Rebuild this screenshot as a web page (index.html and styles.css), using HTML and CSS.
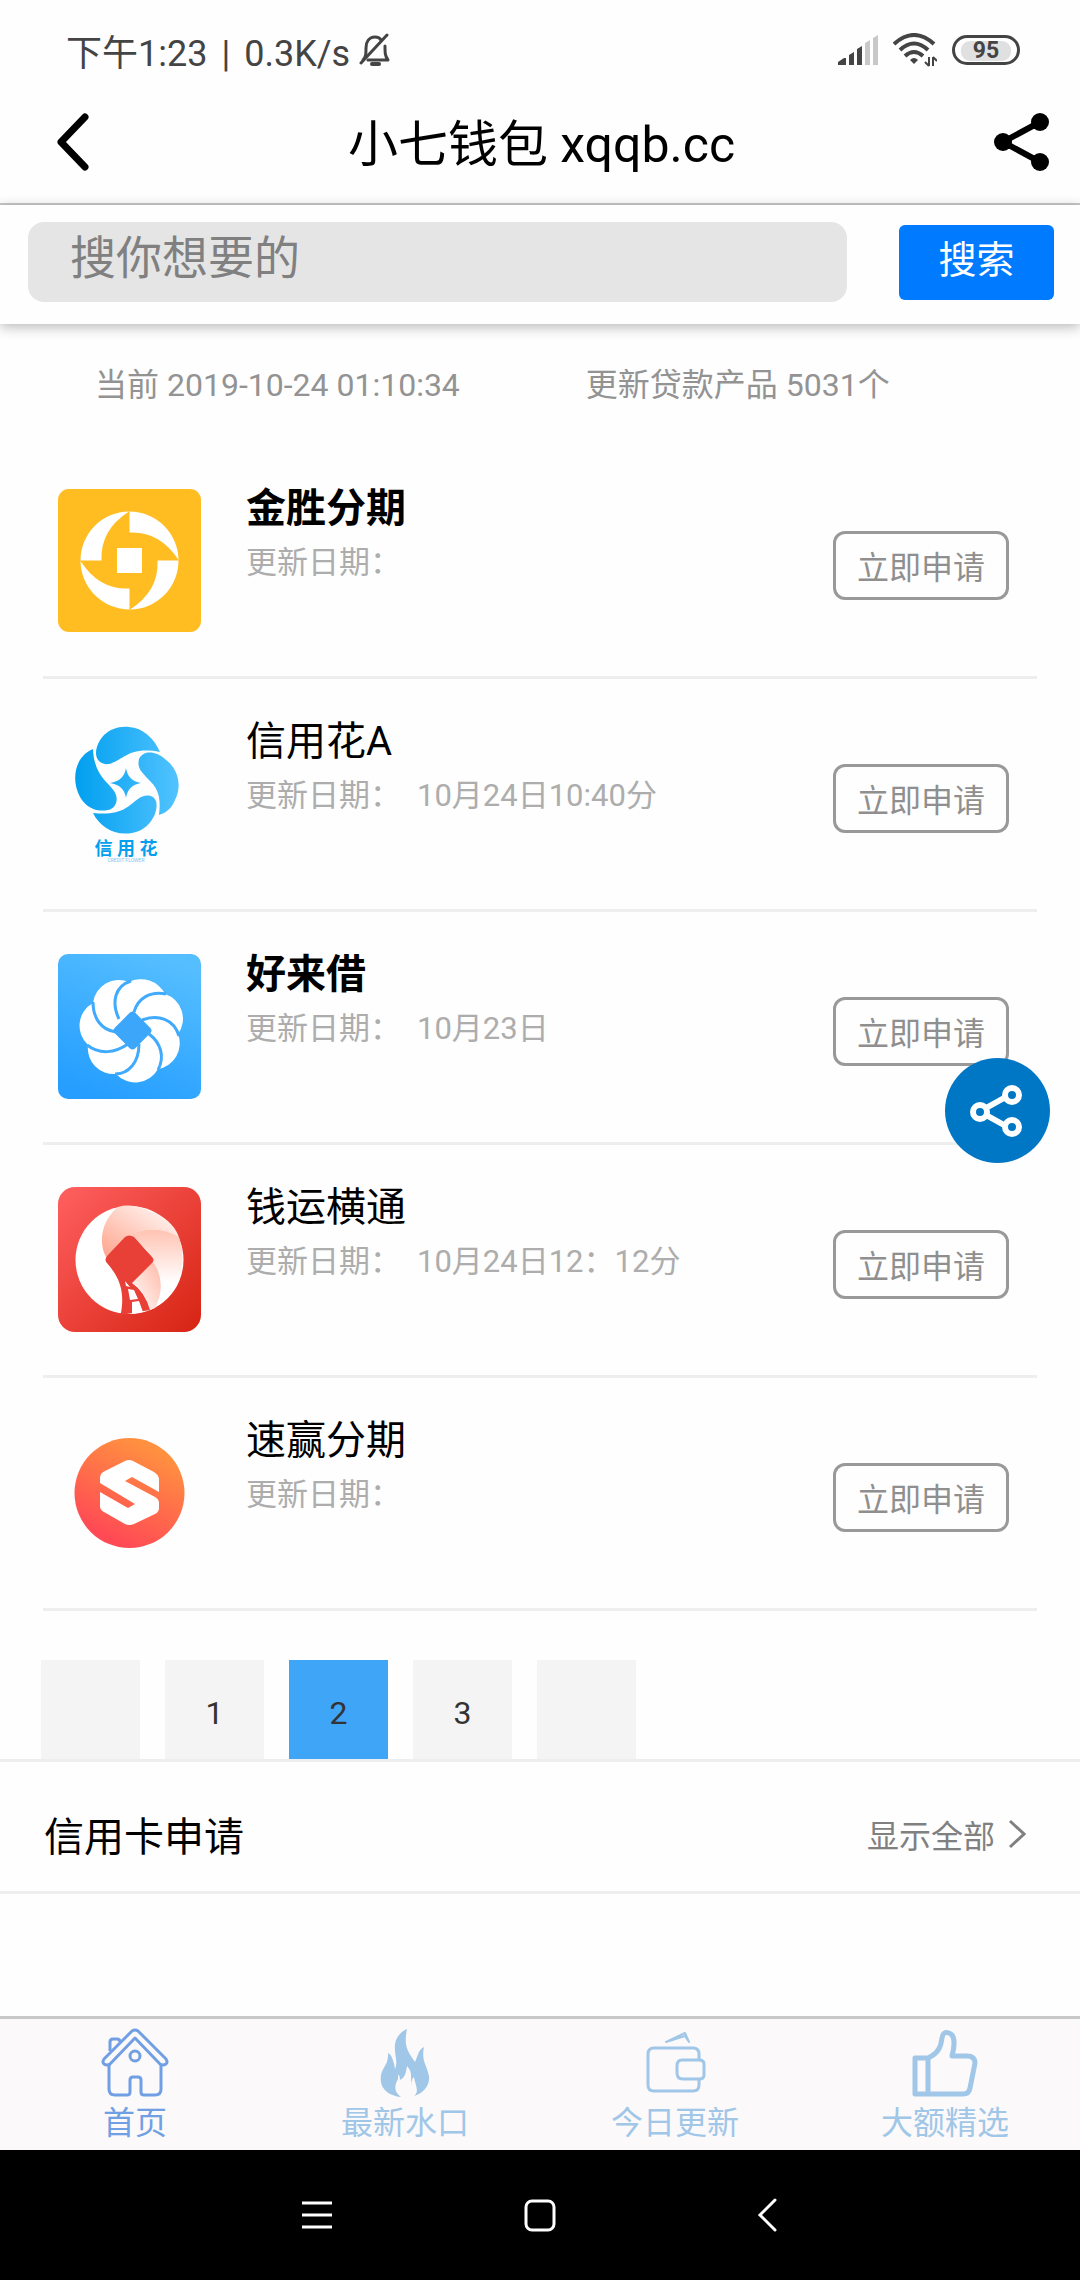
FILE: index.html
```html
<!DOCTYPE html>
<html lang="zh-CN">
<head>
<meta charset="utf-8">
<meta name="viewport" content="width=device-width, initial-scale=1">
<title>小七钱包 xqqb.cc</title>
<link rel="stylesheet" href="styles.css">
</head>
<body>
<div class="status-bar">
  <div class="status-left">
    <div class="status-text"><span>下午1:23</span><span>|</span><span>0.3K/s</span></div>
    <svg width="32" height="34" viewBox="0 0 32 34" fill="none" stroke="#444" stroke-width="3" stroke-linecap="round" stroke-linejoin="round"><path d="M4 27c3-3 3-6 3-12 0-6 3-11 9-11 3 0 5 1 6 3M26 13c0 7 0 10 3 14H9"/><path d="M2 30L28 2"/><path d="M13 31h7" stroke-width="4"/></svg>
  </div>
  <div class="status-right">
    <svg width="40" height="30" viewBox="0 0 40 30"><g fill="#444"><path d="M0 30v-3l6-4h2v7z"/><path d="M11 30V20l5-3v13zM19 30V14l5-3v19z"/></g><g fill="#c8c8c8"><path d="M27 30V8l5-3v25zM35 30V3l5-3v30z"/></g></svg>
    <svg width="44" height="34" viewBox="0 0 44 34" fill="none" stroke="#444" stroke-width="4"><path d="M1 11Q21-7 41 11"/><path d="M7 17q14-13 28 0"/><path d="M12 23q9-8 18 0"/><path d="M17 27q4-4 8 0l-4 4z" fill="#444" stroke="none"/><path d="M36 24v9M40 24v9" stroke-width="2"/><path d="M32 29l4 4M40 24l4 4" stroke-width="2"/></svg>
    <span class="battery"><span class="battery-level">95</span></span>
  </div>
</div>
<header class="title-bar">
  <button class="icon-button" type="button" aria-label="返回"><svg width="32" height="58" viewBox="0 0 32 58" fill="none" stroke="#000" stroke-width="7" stroke-linecap="round" stroke-linejoin="round"><path d="M28 4L4 29l24 25"/></svg></button>
  <h1 class="page-title">小七钱包 xqqb.cc</h1>
  <button class="icon-button" type="button" aria-label="分享"><svg width="56" height="60" viewBox="0 0 56 60"><path d="M46 10L9 30l37 20" fill="none" stroke="#000" stroke-width="6"/><circle cx="46" cy="10" r="9"/><circle cx="9" cy="30" r="9"/><circle cx="46" cy="50" r="9"/></svg></button>
</header>
<form class="search-bar">
  <input class="search-input" type="text" placeholder="搜你想要的" aria-label="搜你想要的">
  <button class="search-button" type="submit">搜索</button>
</form>
<main class="content">
  <div class="summary"><span>当前 2019-10-24 01:10:34</span><span>更新贷款产品 5031个</span></div>
  <ul class="products">
    <li class="product">
      <svg class="logo" viewBox="0 -1 143 145"><rect width="143" height="143" rx="11" fill="#ffbd22"/><g fill="#fff"><rect x="59" y="59" width="25" height="25"/><path id="blade" d="M71.500 22.500a49 49 0 0 1 49 48.500Q102 42 71.500 43.500z"/><use href="#blade" transform="rotate(90 71.500 71.500)"/><use href="#blade" transform="rotate(180 71.500 71.500)"/><use href="#blade" transform="rotate(270 71.500 71.500)"/></g></svg>
      <div class="info"><h2 class="name name-strong">金胜分期</h2><p class="date">更新日期：</p></div>
      <button class="apply" type="button">立即申请</button>
    </li>
    <li class="product">
      <svg class="logo" viewBox="0 0 143 145"><defs><linearGradient id="sky" x1="17" y1="0" x2="121" y2="0" gradientUnits="userSpaceOnUse"><stop offset="0" stop-color="#009fef"/><stop offset="1" stop-color="#52c3ff"/></linearGradient></defs><g fill="url(#sky)"><path d="M102 31C96 17 85 7 71 6C52 4 39 17 38 32C38 40 44 44 51 43C65 40 70 25 102 31z"/><path d="M81 38C86 28 99 31 107 38C121 48 124 66 117 79C114 87 108 92 101 94C103 77 101 68 90 58C83 50 79 47 81 38z"/><path d="M35 28C20 34 15 51 18 65C22 83 35 92 50 89C59 87 61 77 56 70C50 61 36 54 35 28z"/><path d="M35 92C42 106 56 115 74 112C92 109 101 91 98 80C95 73 86 73 80 78C69 86 63 95 35 92z"/><path d="M68 47Q70 60 83 62Q70 64 68 77Q66 64 52 62Q66 60 68 47z"/></g><text class="logo-name" x="68" y="134" text-anchor="middle">信 用 花</text><text class="logo-caption" x="68" y="141" text-anchor="middle">CREDIT FLOWER</text></svg>
      <div class="info"><h2 class="name">信用花A</h2><p class="date">更新日期：<span>10月24日10:40分</span></p></div>
      <button class="apply" type="button">立即申请</button>
    </li>
    <li class="product">
      <svg class="logo" viewBox="0 0 143 145"><defs><linearGradient id="azure" x1=".7" y1="0" x2=".3" y2="1"><stop offset="0" stop-color="#55beff"/><stop offset="1" stop-color="#259eff"/></linearGradient></defs><rect width="143" height="145" rx="10" fill="url(#azure)"/><path d="M71 28A27 27 0 0 1 107 40A26 26 0 0 1 120 80A26 26 0 0 1 100 115A26 26 0 0 1 58 120A26 26 0 0 1 30 91A26 26 0 0 1 35 49A26 26 0 0 1 71 28z" fill="#fff"/><g fill="none" stroke="#40aafd" stroke-width="3"><path d="M73 27C57 32 53 48 61 65"/><path d="M108 40C92 37 80 44 76 58"/><path d="M121 82C116 65 100 60 84 66"/><path d="M100 116C107 103 103 89 91 80"/><path d="M57 120C71 120 81 108 81 90"/><path d="M29 91C42 101 57 99 70 90"/><path d="M35 48C35 64 43 76 58 78"/></g><rect x="60" y="62" width="29" height="29" rx="4" fill="#3ca6fb" transform="rotate(45 74.500 76.500)"/></svg>
      <div class="info"><h2 class="name name-strong">好来借</h2><p class="date">更新日期：<span>10月23日</span></p></div>
      <button class="apply" type="button">立即申请</button>
    </li>
    <li class="product">
      <svg class="logo" viewBox="0 0 143 145"><defs><linearGradient id="red" x1="0" y1="0" x2="1" y2="1"><stop offset="0" stop-color="#ff6060"/><stop offset="1" stop-color="#d62413"/></linearGradient><linearGradient id="fold1" x1="0" y1="1" x2="1" y2="0"><stop offset="0" stop-color="#ffa48c"/><stop offset="1" stop-color="#fff"/></linearGradient><linearGradient id="fold2" x1="0" y1="0" x2="0" y2="1"><stop offset="0" stop-color="#ffc3b2"/><stop offset=".7" stop-color="#fff"/></linearGradient><linearGradient id="fold3" x1="1" y1="0" x2="0" y2="1"><stop offset="0" stop-color="#ffb7a5"/><stop offset="1" stop-color="#fff"/></linearGradient></defs><rect width="143" height="145" rx="17" fill="url(#red)"/><circle cx="71.500" cy="73" r="54" fill="#fff"/><path d="M60 20Q72 16 89 23Q114 31 121 50Q98 36 72 48L48 70C39 52 46 31 60 20z" fill="url(#fold1)"/><path d="M71 48Q98 36 121 50Q127 67 123 84Q119 107 97 119Q106 94 95 74L88 62z" fill="url(#fold2)"/><path d="M94 73Q110 96 97 121L92 123Q88 105 74 95z" fill="url(#fold3)"/><path d="M76 50L94 70Q97 73 94 76L74 96Q87 105 92 123L63 128H46L63 126C67 103 61 90 49 76Q46 73 49 69L67 50Q71 47 76 50z" fill="#e83f36"/><path d="M67 94l5 6-4-1zM70 102l6 1 4 9-8 1zM74 115l7-1 4 11-11 2z" fill="#fff"/></svg>
      <div class="info"><h2 class="name">钱运横通</h2><p class="date">更新日期：<span>10月24日12：12分</span></p></div>
      <button class="apply" type="button">立即申请</button>
    </li>
    <li class="product">
      <svg class="logo" viewBox="0 0 143 145"><defs><linearGradient id="sunset" x1=".7" y1=".1" x2=".3" y2=".9"><stop offset="0" stop-color="#ff9040"/><stop offset="1" stop-color="#ff4a55"/></linearGradient></defs><circle cx="71.500" cy="73" r="55" fill="url(#sunset)"/><path d="M42 63V58Q42 53 47 51L67 41Q71 39 75 41L96 52Q101 55 101 60V72L74 57L67 61L97 77Q101 79 101 83V88Q101 92 97 94L76 104Q71 106 67 104L46 92Q42 90 42 86V72L70 88L77 84Z" fill="#fff"/></svg>
      <div class="info"><h2 class="name">速赢分期</h2><p class="date">更新日期：</p></div>
      <button class="apply" type="button">立即申请</button>
    </li>
  </ul>
  <nav class="pager" aria-label="分页">
    <a class="page" href="#prev" aria-label="上一页"></a><a class="page" href="#1">1</a><a class="page page-current" href="#2" aria-current="page">2</a><a class="page" href="#3">3</a><a class="page" href="#next" aria-label="下一页"></a>
  </nav>
  <section class="cards">
    <h2 class="cards-title">信用卡申请</h2>
    <a class="more" href="#cards">显示全部<svg width="18" height="30" viewBox="0 0 18 30" fill="none" stroke="#808080" stroke-width="3"><path d="M2 2l14 13L2 28"/></svg></a>
  </section>
</main>
<button class="share-float" type="button" aria-label="分享"><svg width="58" height="54" viewBox="0 0 58 54" fill="none" stroke="#fff" stroke-width="6"><path d="M17 24l18-10M17 31l18 10"/><circle cx="11" cy="28" r="7"/><circle cx="43" cy="11" r="7"/><circle cx="43" cy="43" r="7"/></svg></button>
<nav class="tab-bar">
  <a class="tab tab-current" href="#home"><svg width="68" height="70" viewBox="0 0 68 70" fill="none" stroke="#719fe4" stroke-width="3" stroke-linejoin="round"><path d="M31 3q3-2 6 0L65 31q2 3 0 5-3 2-6 0L34 10 9 36q-3 2-6 0-2-2 0-5z"/><path d="M9 23V14q0-3 3-3h4q3 0 3 3"/><path d="M8 37v24q0 6 6 6h12q3 0 3-3V52q0-3 3-3h5q3 0 3 3v12q0 3 3 3h11q6 0 6-6V37"/><circle cx="34" cy="28" r="5"/></svg><span>首页</span></a>
  <a class="tab" href="#latest"><svg width="68" height="70" viewBox="0 0 68 70" fill="#a0c6e8"><path d="M36 1C27 5 23 13 24 22C24 29 27 34 24 41C23 34 21 27 17 25C18 39 8 40 10 54C11 62 19 68 30 69C23 64 23 58 27 51Q27 45 28 47Q29 49 29 52C35 49 35 43 36 38C41 43 40 48 40 53Q40 56 41 58Q39 52 43 49C44 57 49 63 43 68C53 65 59 57 58 48C56 37 50 33 53 19C47 22 47 28 44 34C38 25 32 19 36 1z"/></svg><span>最新水口</span></a>
  <a class="tab" href="#today"><svg width="68" height="70" viewBox="0 0 68 70" fill="none" stroke="#a0c6e8" stroke-width="3" stroke-linejoin="round"><path d="M25 14l19-9 4 9-4-6z" stroke-width="2"/><path d="M58 31v-5q0-6-6-6H13q-6 0-6 6v31q0 6 6 6h39q6 0 6-6v-5"/><path d="M41 32h17q5 0 5 4v11q0 4-5 4H42q-6 0-6-6v-7q0-6 5-6z"/></svg><span>今日更新</span></a>
  <a class="tab" href="#large"><svg width="68" height="70" viewBox="0 0 68 70" fill="none" stroke="#a0c6e8" stroke-width="5" stroke-linejoin="round"><path d="M4 30h13v36H4zM17 30C28 25 30 18 31 10q1-7 7-5c6 2 6 12 3 23h15q8 0 8 7l-5 25q-1 6-7 6H17"/></svg><span>大额精选</span></a>
</nav>
<div class="system-bar">
  <button class="icon-button" type="button" aria-label="菜单"><svg width="34" height="34" viewBox="0 0 34 34" stroke="#fff" stroke-width="3"><path d="M2 5h30M2 17h30M2 29h30"/></svg></button>
  <button class="icon-button" type="button" aria-label="主页"><svg width="34" height="34" viewBox="0 0 34 34" fill="none" stroke="#fff" stroke-width="3"><rect x="3" y="3" width="28" height="29" rx="6"/></svg></button>
  <button class="icon-button" type="button" aria-label="返回"><svg width="34" height="34" viewBox="0 0 34 34" fill="none" stroke="#fff" stroke-width="3" stroke-linecap="round"><path d="M29 2L14 17l15 15"/></svg></button>
</div>
</body>
</html>
```
FILE: styles.css
```css
* { box-sizing: border-box; }

body {
  margin: 0;
  min-height: 100vh;
  display: flex;
  flex-direction: column;
  background: #fefefe;
  color: #000;
  font-family: Roboto, "Noto Sans CJK SC", sans-serif;
  font-size: 32px;
}

h1, h2, p, ul { margin: 0; padding: 0; font-weight: 400; }
ul { list-style: none; }
a { color: inherit; text-decoration: none; }
button, input { font: inherit; border: 0; padding: 0; }
svg { display: block; flex: none; }

.icon-button { background: none; display: flex; }

.status-bar {
  height: 84px;
  padding: 16px 60px 0 66px;
  display: flex;
  align-items: center;
  justify-content: space-between;
  color: #444;
  font-size: 36px;
}
.status-left { display: flex; align-items: center; gap: 9px; }
.status-text { display: flex; align-items: baseline; gap: 14px; }
.status-right { display: flex; align-items: center; gap: 15px; }
.battery {
  width: 68px;
  height: 30px;
  padding: 3px 6px;
  border: 3px solid #444;
  border-radius: 15px;
}
.battery-level {
  display: block;
  border-radius: 9px;
  background: #e0e0e0;
  font-size: 23px;
  font-weight: 700;
  line-height: 20px;
  text-align: center;
}

.title-bar {
  height: 121px;
  padding: 0 30px 3px 57px;
  border-bottom: 2px solid #c8c8c8;
  display: flex;
  align-items: center;
  justify-content: space-between;
}
.page-title { padding-top: 5px; font-size: 50px; line-height: 64px; }

.search-bar {
  height: 119px;
  padding: 0 26px 5px 28px;
  display: flex;
  align-items: center;
  gap: 52px;
  box-shadow: 0 3px 12px rgba(0, 0, 0, .28);
}
.search-input {
  flex: 1;
  min-width: 0;
  height: 80px;
  padding: 0 42px 8px;
  border-radius: 16px;
  background: #e5e5e5;
  font-size: 46px;
}
.search-input::placeholder { color: #808080; opacity: 1; }
.search-button {
  width: 155px;
  height: 75px;
  padding-bottom: 12px;
  border-radius: 6px;
  background: #007aff;
  color: #fff;
  font-size: 38px;
}

.content { flex: 1; }

.summary {
  display: flex;
  gap: 126px;
  padding: 36px 95px 0;
  height: 122px;
  line-height: 50px;
  color: #939393;
}

.products { padding: 0 43px; }
.product {
  height: 233px;
  padding: 42px 28px 0 15px;
  border-bottom: 3px solid #eee;
  display: flex;
  align-items: flex-start;
}
.logo { width: 143px; height: 145px; }
.logo-name { fill: #069fee; font-size: 18px; font-weight: 700; }
.logo-caption { fill: #7cc6f2; font-size: 5px; }
.info { flex: 1; padding-left: 45px; }
.name { font-size: 40px; line-height: 42px; }
.name-strong { font-weight: 700; }
.date {
  display: flex;
  gap: 16px;
  margin-top: 13px;
  font-size: 31px;
  line-height: 40px;
  color: #adadad;
}
.apply {
  width: 176px;
  height: 69px;
  margin-top: 43px;
  padding-bottom: 2px;
  border: 3px solid #999;
  border-radius: 12px;
  background: none;
  color: #8f8f8f;
}

.pager { display: flex; gap: 25px; padding: 49px 41px 0; }
.page {
  width: 99px;
  height: 99px;
  background: #f4f4f4;
  color: #333;
  line-height: 106px;
  text-align: center;
}
.page-current { background: #3ea5f7; }

.cards {
  height: 135px;
  padding: 14px 54px 0 44px;
  border: solid #eee;
  border-width: 3px 0;
  display: flex;
  justify-content: space-between;
  align-items: center;
}
.cards-title { font-size: 40px; }
.more { display: flex; align-items: center; gap: 13px; color: #808080; }

.share-float {
  position: fixed;
  right: 30px;
  bottom: 1117px;
  width: 105px;
  height: 105px;
  border-radius: 50%;
  background: #0077c4;
  display: grid;
  place-items: center;
}

.tab-bar {
  height: 134px;
  border-top: 3px solid #c8c8c8;
  background: #fbf9fa;
  color: #a0c6e8;
  display: grid;
  grid-template-columns: repeat(4, 1fr);
}
.tab {
  padding-top: 9px;
  display: flex;
  flex-direction: column;
  align-items: center;
  line-height: 50px;
}
.tab-current { color: #719fe4; }

.system-bar {
  height: 130px;
  background: #000;
  display: flex;
  justify-content: center;
  align-items: center;
  gap: 189px;
}
```
